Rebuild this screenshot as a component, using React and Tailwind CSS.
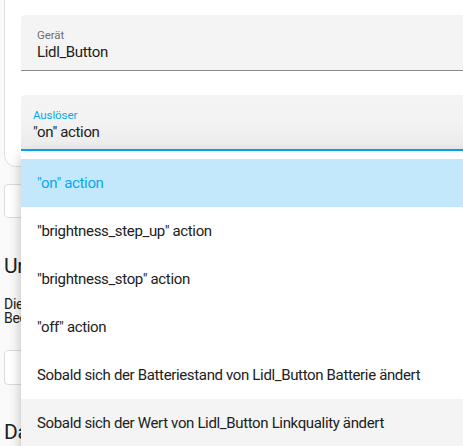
import React from 'react'

const triggers = [
  '"on" action',
  '"brightness_step_up" action',
  '"brightness_stop" action',
  '"off" action',
  'Sobald sich der Batteriestand von Lidl_Button Batterie ändert',
  'Sobald sich der Wert von Lidl_Button Linkquality ändert',
]

const App = () => {
  const selected = 0
  const hovered = 5

  return (
    <div className="relative w-screen h-screen overflow-hidden bg-[#fafafa] font-['Roboto',sans-serif] text-[#212121]">
      <div className="w-[720px] pl-1">
        {/* trigger card */}
        <div className="-mt-4 rounded-xl border border-[#e0e0e0] bg-white pt-[30px] pb-[15px] pl-4">
          <div className="h-14 rounded-t-[4px] border-b border-[#8c8c8c] bg-[#f4f4f4] pl-4 pt-[13px]">
            <div className="text-[11.5px] leading-[14px] tracking-[-0.1px] text-[#6f6f6f]">Gerät</div>
            <div className="text-[15px] leading-[20px] tracking-[-0.35px]">Lidl_Button</div>
          </div>
          <div className="mt-6 h-14 rounded-t-[4px] border-b-2 border-[#03a9f4] bg-gradient-to-b from-[#f4f4f4] via-[#f3f3f3] to-[#ebebeb] pl-3 pt-[13px]">
            <div className="text-[11.5px] leading-[14px] tracking-[-0.1px] text-[#03a9f4]">Auslöser</div>
            <div className="text-[15px] leading-[20px] tracking-[-0.35px]">"on" action</div>
          </div>
        </div>

        <div className="mt-[17px] h-[34px] rounded-[4px] border border-[#dcdcdc] bg-white"></div>

        <h2 className="mt-[34px] text-[21px] leading-[28px] tracking-[-0.4px] text-[#212121]">Und wenn (optional)</h2>
        <p className="mt-[17px] w-[420px] text-[14px] leading-[14px] tracking-[-0.3px] text-[#212121]">
          Die Bedingungen sind ein optionaler Teil einer Automatisierung und
          <br />
          Bedingungen werden nach dem Auslöser geprüft.
        </p>

        <div className="mt-[25px] h-[35px] rounded-[4px] border border-[#dcdcdc] bg-white"></div>

        <h2 className="mt-[33px] text-[21px] leading-[28px] tracking-[-0.4px] text-[#212121]">Dann mach</h2>
      </div>

      {/* dropdown menu */}
      <div className="absolute left-[21px] top-[151px] w-[640px] bg-white py-2 shadow-[0_5px_12px_rgba(0,0,0,0.25)]">
        {triggers.map((t, i) => (
          <div
            key={i}
            className={
              'flex h-12 items-center pl-4 text-[15px] tracking-[-0.35px] ' +
              (i === selected
                ? 'bg-[#c3e8fb] text-[#03a9f4]'
                : i === hovered
                ? 'bg-[#f4f4f4] text-[#212121]'
                : 'text-[#212121]')
            }
          >
            {t}
          </div>
        ))}
      </div>
    </div>
  )
}

export default App
